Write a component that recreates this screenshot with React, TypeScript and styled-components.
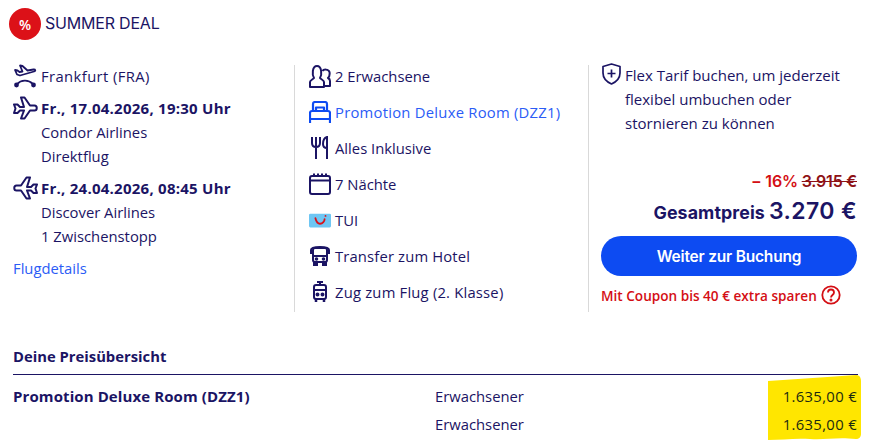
import styled, { createGlobalStyle } from "styled-components";

const NAVY = "#1b1464";
const BLUE = "#0d4bf2";
const LINK = "#2b5cf6";
const RED = "#d40e14";

const GlobalStyle = createGlobalStyle`
  html, body { margin: 0; padding: 0; background: #fff; }
  body {
    width: 870px;
    height: 442px;
    overflow: hidden;
    font-family: "Open Sans", "Noto Sans", sans-serif;
    font-size: 14.8px;
    color: ${NAVY};
  }
`;

const Page = styled.div`
  width: 870px;
  height: 442px;
  padding: 8px 12px 0 9px;
  box-sizing: border-box;
`;

const Header = styled.div`
  display: flex;
  align-items: center;
  gap: 4px;
  height: 32px;
`;

const DealBadge = styled.div`
  width: 32px;
  height: 32px;
  border-radius: 50%;
  background: #dc1118;
  color: #fff;
  display: flex;
  align-items: center;
  justify-content: center;
  font-size: 14px;
  font-weight: 600;
`;

const DealLabel = styled.span`
  font-family: "Inter", sans-serif;
  font-size: 16px;
  letter-spacing: -0.2px;
  margin-top: -2px;
`;

const Columns = styled.div`
  display: grid;
  grid-template-columns: 285px 294px 1fr;
  height: 247px;
  margin-top: 25px;
`;

const FlightColumn = styled.div`
  padding: 0 0 0 4px;
  margin-top: -1px;
`;

const MiddleColumn = styled.div`
  border-left: 1px solid #d9d9d9;
  padding-left: 14px;
  display: flex;
  flex-direction: column;
`;

const OfferColumn = styled.div`
  border-left: 1px solid #d9d9d9;
  padding: 0 1px 0 12px;
  display: flex;
  flex-direction: column;
`;

const FlightRow = styled.div<{ $gap?: number }>`
  display: grid;
  grid-template-columns: 28px 1fr;
  line-height: 24px;
  margin-top: ${(p) => p.$gap ?? 0}px;
`;

const IconSlot = styled.div`
  height: 24px;
  display: flex;
  align-items: center;
  svg { display: block; }
`;

const Place = styled.span`
  letter-spacing: 0.4px;
`;

const Strong = styled.div`
  font-size: 15px;
  font-weight: 700;
  letter-spacing: 0.25px;
`;

const FlightLink = styled.a`
  display: block;
  color: ${LINK};
  line-height: 24px;
  margin-top: 8px;
`;

const InfoRow = styled.div<{ $link?: boolean; $track?: number }>`
  display: flex;
  align-items: center;
  gap: 4px;
  height: 36px;
  color: ${(p) => (p.$link ? LINK : NAVY)};
  letter-spacing: ${(p) => p.$track ?? 0}px;
  &:first-child { margin-top: -7px; }
`;

const InfoIcon = styled.div`
  width: 22px;
  height: 24px;
  display: flex;
  align-items: center;
  justify-content: center;
  flex: none;
`;

const FlexNote = styled.div`
  display: flex;
  gap: 3px;
  font-size: 15px;
  line-height: 24px;
  margin-top: -2px;
  height: 97px;
  svg { flex: none; }
`;

const PriceLine = styled.div`
  text-align: right;
  font-family: "Inter", sans-serif;
  font-weight: 600;
  color: ${RED};
  font-size: 16px;
  letter-spacing: -0.2px;
  line-height: 20px;
  margin-top: 11px;
`;

const OldPrice = styled.s`
  color: #8e1216;
`;

const TotalLine = styled.div`
  display: flex;
  justify-content: flex-end;
  align-items: baseline;
  gap: 4px;
  font-family: "Inter", sans-serif;
  font-weight: 700;
  margin-top: 6px;
  height: 30px;
`;

const TotalLabel = styled.span`
  font-size: 17.8px;
  letter-spacing: 0.1px;
`;

const TotalValue = styled.span`
  font-size: 23px;
  font-weight: 600;
  letter-spacing: 0.4px;
`;

const BookButton = styled.button`
  width: 256px;
  height: 40px;
  margin-top: 9px;
  border: 0;
  border-radius: 20px;
  background: ${BLUE};
  color: #fff;
  font-family: "Inter", sans-serif;
  font-weight: 600;
  font-size: 15.5px;
  letter-spacing: -0.2px;
`;

const CouponLine = styled.div`
  display: flex;
  align-items: center;
  gap: 4px;
  color: ${RED};
  font-size: 13.6px;
  font-weight: 600;
  margin-top: 8px;
  height: 22px;
  white-space: nowrap;
`;

const Summary = styled.section`
  margin: 34px 0 0 4px;
`;

const SummaryTitle = styled.div`
  font-weight: 700;
  font-size: 14.8px;
  line-height: 20px;
  height: 28px;
  border-bottom: 1px solid ${NAVY};
`;

const SummaryBody = styled.div`
  position: relative;
  display: grid;
  grid-template-columns: 422px 1fr auto;
  grid-auto-rows: 28px;
  padding-top: 7px;
  line-height: 28px;
`;

const RoomName = styled.div`
  font-weight: 700;
  font-size: 15px;
  letter-spacing: 0.1px;
`;

const Amount = styled.div`
  position: relative;
  text-align: right;
  color: #1b2a10;
  letter-spacing: 0.35px;
  margin-right: 1px;
`;

const Marker = styled.svg`
  position: absolute;
  right: -3px;
  top: 0;
`;

const PlaneIcon = ({ flip }: { flip?: boolean }) => (
  <svg width="25" height="25" viewBox="0 0 25 25" fill="none" stroke={NAVY} strokeWidth="2" strokeLinejoin="round" style={flip ? { transform: "scaleX(-1)" } : undefined}>
    <path d="M1 8.5l3.5 0 2.5 2.5h4L8 1.5h3.5L17 9.5h4.5c3 0 3 5 0 5H17l-5.5 8H8l3-8H7l-2.5 2.5H1l1.5-4.5z" />
  </svg>
);

const App = () => (
  <>
    <GlobalStyle />
    <Page>
      <Header>
        <DealBadge>%</DealBadge>
        <DealLabel>SUMMER DEAL</DealLabel>
      </Header>
      <Columns>
        <FlightColumn>
          <FlightRow>
            <IconSlot>
              <svg width="24" height="24" viewBox="0 0 24 24" fill="none" stroke={NAVY} strokeWidth="1.8" strokeLinejoin="round">
                <path d="M2 6l2.5.5 2 1.5 3-.5L7 1.5l2.5.5 5 4.5 6-1c2-.2 2.5 1.5.5 2L7 11.5 4 10.5z" />
                <path d="M4 20c4-4 11-5 16 0" />
                <circle cx="3.5" cy="21" r="1.5" fill={NAVY} />
                <circle cx="20.5" cy="21" r="1.5" fill={NAVY} />
              </svg>
            </IconSlot>
            <Place>Frankfurt (FRA)</Place>
          </FlightRow>
          <FlightRow $gap={8}>
            <IconSlot><PlaneIcon /></IconSlot>
            <Strong>Fr., 17.04.2026, 19:30 Uhr</Strong>
          </FlightRow>
          <FlightRow><span /><span>Condor Airlines</span></FlightRow>
          <FlightRow><span /><span>Direktflug</span></FlightRow>
          <FlightRow $gap={8}>
            <IconSlot><PlaneIcon flip /></IconSlot>
            <Strong>Fr., 24.04.2026, 08:45 Uhr</Strong>
          </FlightRow>
          <FlightRow><span /><span>Discover Airlines</span></FlightRow>
          <FlightRow><span /><span>1 Zwischenstopp</span></FlightRow>
          <FlightLink>Flugdetails</FlightLink>
        </FlightColumn>

        <MiddleColumn>
          <InfoRow>
            <InfoIcon>
              <svg width="22" height="23" viewBox="0 0 22 23" fill="none" stroke={NAVY} strokeWidth="2" strokeLinejoin="round">
                <path d="M1 22v-5c0-2 3-2.5 4-4-2-3-2-12 3-12s5 9 3 12c1 1.5 4 2 4 4v5z" />
                <path d="M13.5 6c1-2 6-2 7 1 .5 3-.5 5-1.5 6 1 .5 2 1.5 2 3v5h-6" />
              </svg>
            </InfoIcon>
            2 Erwachsene
          </InfoRow>
          <InfoRow $link $track={0.25}>
            <InfoIcon>
              <svg width="22" height="22" viewBox="0 0 22 22" fill="none" stroke={BLUE} strokeWidth="2.2" strokeLinejoin="round">
                <path d="M1 22V12c0-1 1-2 2-2h16c1 0 2 1 2 2v10M1 18h20" />
                <path d="M4 10V3c0-1 1-2 2-2h10c1 0 2 1 2 2v7M7 10V6.5h8V10" />
              </svg>
            </InfoIcon>
            Promotion Deluxe Room (DZZ1)
          </InfoRow>
          <InfoRow>
            <InfoIcon>
              <svg width="20" height="24" viewBox="0 0 20 24" fill="none" stroke={NAVY} strokeWidth="2">
                <path d="M2 1v6c0 3 2 4 4 4s4-1 4-4V1M6 1v22" />
                <path d="M17 23V1c-3 1-4 4-4 7s1 4 4 4" />
              </svg>
            </InfoIcon>
            Alles Inklusive
          </InfoRow>
          <InfoRow>
            <InfoIcon>
              <svg width="22" height="22" viewBox="0 0 22 22" fill="none" stroke={NAVY} strokeWidth="2">
                <rect x="1" y="3" width="20" height="18" rx="2" />
                <path d="M1 7.5h20M5 .5v3M9 .5v3M13 .5v3M17 .5v3" />
              </svg>
            </InfoIcon>
            7 Nächte
          </InfoRow>
          <InfoRow>
            <InfoIcon>
              <svg width="24" height="15" viewBox="0 0 24 15">
                <rect width="24" height="15" rx="1.5" fill="#6ec6f3" />
                <path d="M7 5c1 4 3 6 5 6 3 0 5-3 5-5" fill="none" stroke="#d8121a" strokeWidth="2" strokeLinecap="round" />
                <circle cx="18" cy="2.5" r="1" fill="#d8121a" />
              </svg>
            </InfoIcon>
            TUI
          </InfoRow>
          <InfoRow $track={0.15}>
            <InfoIcon>
              <svg width="20" height="20" viewBox="0 0 20 20" fill="none" stroke={NAVY} strokeWidth="2">
                <path d="M1 8V4c0-2 3-3 9-3s9 1 9 3v4" />
                <rect x="3" y="2" width="14" height="14" rx="2" />
                <path d="M3 10h14" />
                <path d="M4 16v3h3v-3M13 16v3h3v-3" fill={NAVY} />
                <circle cx="6.5" cy="13" r=".8" fill={NAVY} />
                <circle cx="13.5" cy="13" r=".8" fill={NAVY} />
              </svg>
            </InfoIcon>
            Transfer zum Hotel
          </InfoRow>
          <InfoRow $track={0.2}>
            <InfoIcon>
              <svg width="16" height="22" viewBox="0 0 16 22" fill="none" stroke={NAVY} strokeWidth="2">
                <path d="M5 1h6M8 1v3" />
                <rect x="2" y="4" width="12" height="14" rx="2" />
                <path d="M2 9h12" />
                <path d="M4 18v3M12 18v3" strokeWidth="2.5" />
                <circle cx="5.5" cy="13.5" r="1" fill={NAVY} />
                <circle cx="10.5" cy="13.5" r="1" fill={NAVY} />
              </svg>
            </InfoIcon>
            Zug zum Flug (2. Klasse)
          </InfoRow>
        </MiddleColumn>

        <OfferColumn>
          <FlexNote>
            <svg width="21" height="22" viewBox="0 0 21 22" fill="none" stroke={NAVY} strokeWidth="1.7">
              <path d="M10.5 1L2 3.500V10c0 5 3 8.500 8.500 11 5.500-2.500 8.500-6 8.500-11V3.500z" strokeLinejoin="round" />
              <path d="M10.5 6.500v8M6.500 10.500h8" />
            </svg>
            <span>Flex Tarif buchen, um jederzeit<br />flexibel umbuchen oder<br />stornieren zu können</span>
          </FlexNote>
          <PriceLine>− 16% <OldPrice>3.915 €</OldPrice></PriceLine>
          <TotalLine>
            <TotalLabel>Gesamtpreis</TotalLabel>
            <TotalValue>3.270 €</TotalValue>
          </TotalLine>
          <BookButton>Weiter zur Buchung</BookButton>
          <CouponLine>
            Mit Coupon bis 40 € extra sparen
            <svg width="20" height="20" viewBox="0 0 20 20" fill="none" stroke={RED} strokeWidth="1.8">
              <circle cx="10" cy="10" r="8.7" />
              <path d="M7 7.500c0-4 6-4 6 0 0 2.500-3 2.500-3 5" />
              <circle cx="10" cy="15" r=".6" fill={RED} />
            </svg>
          </CouponLine>
        </OfferColumn>
      </Columns>

      <Summary>
        <SummaryTitle>Deine Preisübersicht</SummaryTitle>
        <SummaryBody>
          <Marker width="93" height="65" viewBox="0 0 93 65">
            <path d="M0 6C30 4 60 2 88 0c3 0 5 2 5 6v53c0 3-2 5-5 5-20-2-30 1-46 0-16-1-28 1-42 1z" fill="#ffe600" />
          </Marker>
          <RoomName>Promotion Deluxe Room (DZZ1)</RoomName>
          <span>Erwachsener</span>
          <Amount>1.635,00 €</Amount>
          <span />
          <span>Erwachsener</span>
          <Amount>1.635,00 €</Amount>
        </SummaryBody>
      </Summary>
    </Page>
  </>
);

export default App;
